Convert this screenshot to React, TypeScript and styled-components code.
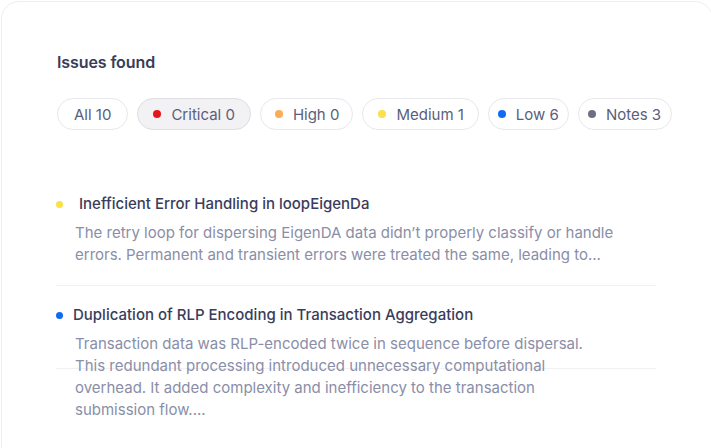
import React from "react";
import styled, { createGlobalStyle } from "styled-components";

const Global = createGlobalStyle`
  html, body { margin: 0; padding: 0; background: #ffffff; overflow: hidden; }
  body { font-family: Inter, "Noto Sans", sans-serif; -webkit-font-smoothing: antialiased; }
`;

const Page = styled.div`
  width: 711px;
  height: 448px;
  padding: 1px 0 0 1px;
  box-sizing: border-box;
  overflow: hidden;
`;

const Card = styled.section`
  width: 712px;
  min-height: 470px;
  box-sizing: border-box;
  border: 1.5px solid #ededf4;
  border-radius: 18px;
  background: #ffffff;
  padding: 50px 0 0 55px;
`;

const Heading = styled.h2`
  margin: 0;
  font-size: 16px;
  line-height: 20px;
  font-weight: 600;
  color: #373c5a;
  letter-spacing: -0.1px;
`;

const Filters = styled.div`
  display: flex;
  gap: 9px;
  margin-top: 26px;
`;

const Pill = styled.button<{ $active?: boolean; $pl: number; $pr: number }>`
  display: inline-flex;
  align-items: center;
  gap: 10px;
  height: 32px;
  padding: 0 ${(p) => p.$pr}px 0 ${(p) => p.$pl}px;
  box-sizing: border-box;
  border-radius: 999px;
  border: 1px solid ${(p) => (p.$active ? "#dedee3" : "#e8e8ed")};
  background: ${(p) => (p.$active ? "#f2f2f4" : "#ffffff")};
  font-family: inherit;
  font-size: 15px;
  color: #5a5e7c;
  cursor: pointer;
`;

const Dot = styled.span<{ $color: string; $size?: number }>`
  width: ${(p) => p.$size ?? 8}px;
  height: ${(p) => p.$size ?? 8}px;
  border-radius: 50%;
  background: ${(p) => p.$color};
  flex: none;
`;

const List = styled.div`
  margin: 45px 0 0 -1px;
  width: 600px;
`;

const Item = styled.article<{ $height?: number }>`
  padding: 19px 0 19px 0;
  border-bottom: 1px solid #f1f1f4;
  ${(p) => (p.$height ? `height: ${p.$height}px; box-sizing: border-box;` : "")}
`;

const TitleRow = styled.div<{ $gap: number }>`
  display: flex;
  align-items: center;
  gap: ${(p) => p.$gap}px;
  height: 20px;
`;

const Title = styled.h3`
  margin: 0;
  font-size: 15px;
  line-height: 20px;
  font-weight: 500;
  color: #393d5b;
`;

const Desc = styled.p`
  margin: 8px 0 0 19px;
  width: 541px;
  font-size: 15px;
  line-height: 22px;
  color: #8a8ea7;
`;

const filters = [
  { label: "All 10", pl: 16, pr: 16 },
  { label: "Critical 0", color: "#e5151b", active: true, pl: 15, pr: 15 },
  { label: "High 0", color: "#fbac56", pl: 14, pr: 13 },
  { label: "Medium 1", color: "#fbe04a", pl: 15, pr: 14 },
  { label: "Low 6", color: "#0f6cf2", pl: 9, pr: 9 },
  { label: "Notes 3", color: "#6d6f84", pl: 9, pr: 10 },
];

export default function App() {
  return (
    <>
      <Global />
      <Page>
        <Card>
          <Heading>Issues found</Heading>
          <Filters>
            {filters.map((f) => (
              <Pill key={f.label} $active={f.active} $pl={f.pl} $pr={f.pr}>
                {f.color && <Dot $color={f.color} />}
                {f.label}
              </Pill>
            ))}
          </Filters>
          <List>
            <Item>
              <TitleRow $gap={16}>
                <Dot $color="#fbe04a" $size={7} />
                <Title>Inefficient Error Handling in loopEigenDa</Title>
              </TitleRow>
              <Desc>
                The retry loop for dispersing EigenDA data didn’t properly classify or handle
                errors. Permanent and transient errors were treated the same, leading to...
              </Desc>
            </Item>
            <Item $height={83}>
              <TitleRow $gap={10}>
                <Dot $color="#0f6cf2" $size={7} />
                <Title>Duplication of RLP Encoding in Transaction Aggregation</Title>
              </TitleRow>
              <Desc>
                Transaction data was RLP-encoded twice in sequence before dispersal. This
                redundant processing introduced unnecessary computational overhead. It added
                complexity and inefficiency to the transaction submission flow....
              </Desc>
            </Item>
          </List>
        </Card>
      </Page>
    </>
  );
}
